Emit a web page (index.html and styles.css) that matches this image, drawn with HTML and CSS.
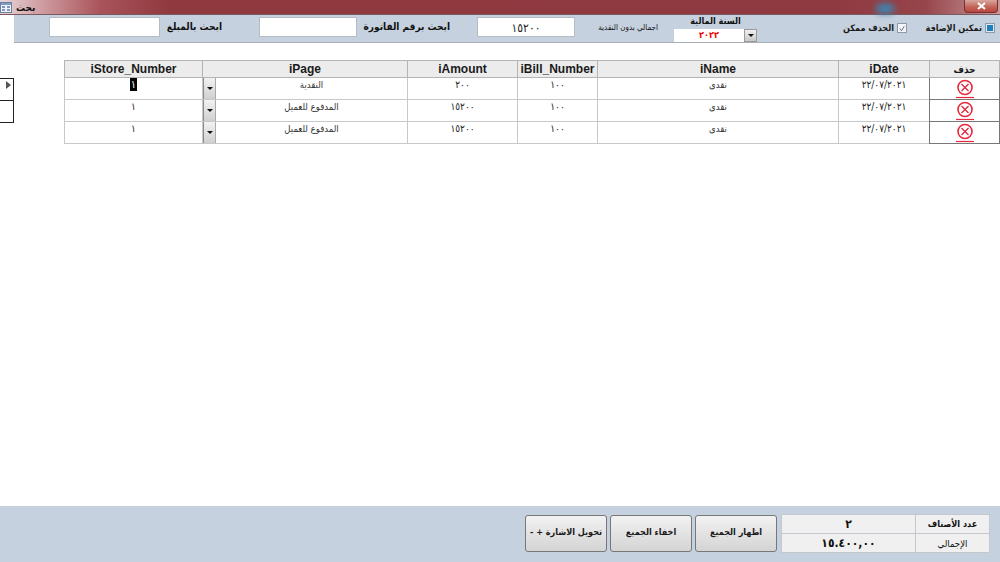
FILE: index.html
```html
<!DOCTYPE html>
<html lang="ar" dir="rtl">
<head>
  <meta charset="UTF-8" />
  <title>بحث</title>
  <link rel="stylesheet" href="styles.css">
</head>
<body>

  <!-- Title bar -->
  <div class="titlebar" dir="ltr">
    <svg class="form-icon" width="12" height="11" viewBox="0 0 12 11">
      <rect x="0.5" y="0.5" width="11" height="10" fill="#eef3fa" stroke="#6d7f9c"/>
      <rect x="1" y="1" width="10" height="2" fill="#7e9cc6"/>
      <path d="M2 5h3M7 5h3M2 8h3M7 8h3" stroke="#5f7ba8" stroke-width="1.4"/>
    </svg>
    <span class="title-text">بحث</span>
    <span class="title-glow"></span>
    <span class="close-btn">
      <svg width="9" height="8" viewBox="0 0 9 8"><path d="M1 1l7 6M8 1L1 7" stroke="#fff" stroke-width="2"/></svg>
    </span>
  </div>

  <!-- Search toolbar -->
  <div class="toolbar">
    <label class="check check-add"><span class="box box-on"></span>تمكين الإضافة</label>
    <label class="check check-del"><span class="box box-ticked">
      <svg width="9" height="9" viewBox="0 0 9 9"><path d="M2 4.5l2 2.5 3-5" fill="none" stroke="#56607a" stroke-width="1"/></svg>
    </span>الحذف ممكن</label>
    <div class="year">
      <div class="year-label">السنة المالية</div>
      <div class="year-combo" dir="ltr">
        <span class="year-value">٢٠٢٢</span>
        <span class="year-arrow"><i class="arrow"></i></span>
      </div>
    </div>
    <span class="total-label">اجمالي بدون النقدية</span>
    <div class="field field-total">١٥٢٠٠</div>
    <span class="search-label label-bill">ابحث برقم الفاتورة</span>
    <div class="field field-bill"></div>
    <span class="search-label label-amount">ابحث بالمبلغ</span>
    <div class="field field-amount"></div>
  </div>

  <!-- Records -->
  <div class="records">
    <table class="grid">
      <colgroup>
        <col class="c-del"><col class="c-date"><col class="c-name"><col class="c-bill"><col class="c-amount"><col class="c-page"><col class="c-store">
      </colgroup>
      <thead>
        <tr>
          <th class="th-del">حذف</th><th>iDate</th><th>iName</th><th>iBill_Number</th><th>iAmount</th><th>iPage</th><th>iStore_Number</th>
        </tr>
      </thead>
      <tbody>
        <tr>
          <td class="del"><svg class="x-icon" width="18" height="20" viewBox="0 0 18 20"><circle cx="9" cy="8.5" r="7" fill="#fff" stroke="#e8283c" stroke-width="1.6"/><path d="M5.5 5l7 7M12.5 5l-7 7" stroke="#d8283c" stroke-width="1.3"/><path d="M0 18.5h18" stroke="#e8283c" stroke-width="1.2"/></svg></td>
          <td class="num">٢٢/٠٧/٢٠٢١</td><td>نقدى</td><td class="num">١٠٠</td><td class="num">٢٠٠</td>
          <td class="combo"><span>النقدية</span><i class="combo-btn"><i class="arrow"></i></i></td>
          <td><span class="selected">١</span></td>
        </tr>
        <tr>
          <td class="del"><svg class="x-icon" width="18" height="20" viewBox="0 0 18 20"><circle cx="9" cy="8.5" r="7" fill="#fff" stroke="#e8283c" stroke-width="1.6"/><path d="M5.5 5l7 7M12.5 5l-7 7" stroke="#d8283c" stroke-width="1.3"/><path d="M0 18.5h18" stroke="#e8283c" stroke-width="1.2"/></svg></td>
          <td class="num">٢٢/٠٧/٢٠٢١</td><td>نقدى</td><td class="num">١٠٠</td><td class="num">١٥٢٠٠</td>
          <td class="combo"><span>المدفوع للعميل</span><i class="combo-btn"><i class="arrow"></i></i></td>
          <td class="num">١</td>
        </tr>
        <tr>
          <td class="del"><svg class="x-icon" width="18" height="20" viewBox="0 0 18 20"><circle cx="9" cy="8.5" r="7" fill="#fff" stroke="#e8283c" stroke-width="1.6"/><path d="M5.5 5l7 7M12.5 5l-7 7" stroke="#d8283c" stroke-width="1.3"/><path d="M0 18.5h18" stroke="#e8283c" stroke-width="1.2"/></svg></td>
          <td class="num">٢٢/٠٧/٢٠٢١</td><td>نقدى</td><td class="num">١٠٠</td><td class="num">١٥٢٠٠</td>
          <td class="combo"><span>المدفوع للعميل</span><i class="combo-btn"><i class="arrow"></i></i></td>
          <td class="num">١</td>
        </tr>
      </tbody>
    </table>
    <div class="selectors">
      <div class="selector"><i class="pointer"></i></div>
      <div class="selector"></div>
    </div>
  </div>

  <!-- Footer -->
  <div class="footer">
    <table class="summary">
      <tr><th>عدد الأصناف</th><td>٢</td></tr>
      <tr><th class="th-plain">الإجمالي</th><td dir="ltr">١٥.٤٠٠,٠٠</td></tr>
    </table>
    <button class="btn">اظهار الجميع</button>
    <button class="btn">اخفاء الجميع</button>
    <button class="btn">تحويل الاشارة + -</button>
  </div>

</body>
</html>
```

FILE: styles.css
```css
html, body {
  height: 100%;
}

body {
  margin: 0;
  background: #fff;
  font-family: "DejaVu Sans Condensed", "DejaVu Sans", sans-serif;
  color: #111;
  display: flex;
  flex-direction: column;
  height: 562px;
  overflow: hidden;
}

/* title bar */
.titlebar {
  position: relative;
  height: 15px;
  display: flex;
  align-items: center;
  flex-shrink: 0;
  background: linear-gradient(to right, #e8d5d8 0, #cf9fa3 40px, #a9545a 100px, #903a40 170px, #8f3a40 840px, #96454a 925px, #c89a9c 1000px);
  border-bottom: 1px solid #7a5a60;
  box-sizing: border-box;
}

.form-icon {
  margin: 1px 0 0 0;
}

.title-text {
  margin-left: 4px;
  font-size: 10px;
  font-weight: bold;
  color: #111;
}

.title-glow {
  position: absolute;
  left: 875px;
  top: 3px;
  width: 20px;
  height: 11px;
  border-radius: 50%;
  background: #3f82ad;
  filter: blur(3px);
}

.close-btn {
  position: absolute;
  right: 2px;
  top: 0;
  width: 34px;
  height: 13px;
  display: flex;
  align-items: center;
  justify-content: center;
  background: linear-gradient(#d8a8a0, #c4685c 55%, #b8453e);
  border: 1px solid #7a3030;
  border-top: 0;
  border-radius: 0 0 4px 4px;
  box-sizing: border-box;
}

/* toolbar */
.toolbar {
  height: 28px;
  margin-left: 14px;
  flex-shrink: 0;
  background: #c5d1de;
  border-bottom: 1px solid #a8adb5;
  box-sizing: border-box;
  display: flex;
  align-items: center;
}

.check {
  display: flex;
  align-items: center;
  gap: 3px;
  font-size: 9px;
  font-weight: bold;
  white-space: nowrap;
  color: #1a1a1a;
  margin-top: -1px;
}

.check-add { margin-right: 5px; width: 67px; }
.check-del { margin-right: 21px; width: 62px; }

.box {
  width: 10px;
  height: 10px;
  box-sizing: border-box;
  flex-shrink: 0;
  border: 1px solid #8e99a8;
  background: #fff;
  display: flex;
}

.box-on {
  background: #1f7fb8;
  box-shadow: inset 0 0 0 1px #dfe8f0;
}

.box-ticked {
  background: #f2f4f7;
}

.year {
  margin-right: 88px;
  width: 83px;
  align-self: flex-end;
}

.year-label {
  font-size: 9px;
  font-weight: bold;
  text-align: center;
  height: 13px;
  line-height: 10px;
}

.year-combo {
  height: 13px;
  display: flex;
  background: #fff;
}

.year-value {
  flex: 1;
  text-align: center;
  font-size: 9px;
  font-weight: bold;
  color: #f00000;
  line-height: 12px;
}

.year-arrow {
  width: 13px;
  background: linear-gradient(#f0f0f0, #c8c8c8);
  border: 1px solid #9a9a9a;
  box-sizing: border-box;
  display: flex;
  align-items: center;
  justify-content: center;
}

.arrow {
  display: block;
  width: 0;
  height: 0;
  border-left: 3px solid transparent;
  border-right: 3px solid transparent;
  border-top: 3px solid #111;
}

.total-label {
  margin-right: 16px;
  width: 62px;
  font-size: 8px;
  white-space: nowrap;
  margin-top: -3px;
}

.field {
  height: 20px;
  background: #fff;
  border: 1px solid #b6bcc4;
  box-sizing: border-box;
  margin-top: -4px;
  text-align: center;
  font-size: 12px;
  letter-spacing: 1.5px;
  line-height: 20px;
  color: #222;
}

.field-total { width: 98px; margin-right: 21px; }
.field-bill { width: 98px; margin-right: 9px; }
.field-amount { width: 111px; margin-right: 7px; }

.search-label {
  font-size: 10px;
  font-weight: bold;
  white-space: nowrap;
  margin-top: -4px;
}

.label-bill { width: 84px; margin-right: 27px; }
.label-amount { width: 55px; margin-right: 37px; }

/* records */
.records {
  flex: 1;
  display: flex;
  justify-content: space-between;
  align-items: flex-start;
  padding-top: 17px;
}

.selectors {
  margin-top: 18px;
  width: 14px;
  flex-shrink: 0;
  border-right: 1px solid #222;
  border-bottom: 1px solid #222;
  box-sizing: border-box;
}

.selector {
  height: 22px;
  border-top: 1px solid #222;
  box-sizing: border-box;
  position: relative;
}

.pointer {
  position: absolute;
  left: 6px;
  top: 2px;
  width: 0;
  height: 0;
  border-top: 4px solid transparent;
  border-bottom: 4px solid transparent;
  border-left: 5px solid #555;
}

.grid {
  border-collapse: collapse;
  table-layout: fixed;
  width: 935px;
  flex-shrink: 0;
}

.c-del { width: 70px; }
.c-date { width: 91px; }
.c-name { width: 241px; }
.c-bill { width: 80px; }
.c-amount { width: 110px; }
.c-page { width: 205px; }
.c-store { width: 138px; }

.grid th {
  height: 17px;
  box-sizing: border-box;
  padding: 0;
  background: #ececec;
  border: 1px solid #b4b4b4;
  font-family: "Liberation Sans", sans-serif;
  font-size: 12px;
  font-weight: bold;
  color: #1a1a1a;
}

.grid .th-del {
  font-family: "DejaVu Sans Condensed", "DejaVu Sans", sans-serif;
  font-size: 10px;
}

.grid td {
  height: 22px;
  padding: 0 0 8px;
  box-sizing: border-box;
  border: 1px solid #c8c8c8;
  text-align: center;
  vertical-align: middle;
  font-size: 9.5px;
  color: #333;
}

.grid td.num {
  font-size: 10px;
  letter-spacing: 1.2px;
  color: #222;
}

.grid td.del {
  padding: 0;
  border: 1px solid #777;
  vertical-align: bottom;
}

.x-icon {
  display: block;
  margin: 1px auto 0;
}

.grid td.combo {
  position: relative;
  padding-left: 13px;
}

.combo-btn {
  position: absolute;
  left: 0;
  top: 0;
  bottom: 0;
  width: 13px;
  display: flex;
  align-items: center;
  justify-content: center;
  background: linear-gradient(#f2f2f2, #cfcfcf);
  border-left: 1px solid #8a8a8a;
  border-right: 1px solid #aaa;
  box-sizing: border-box;
}

.selected {
  background: #000;
  color: #fff;
  padding: 0 1px;
  font-size: 11px;
  line-height: 13px;
  display: inline-block;
}

/* footer */
.footer {
  height: 56px;
  flex-shrink: 0;
  background: #c5d1de;
  display: flex;
  align-items: flex-start;
  padding: 8px 10px 0 0;
  box-sizing: border-box;
  gap: 3px;
}

.summary {
  border-collapse: collapse;
  table-layout: fixed;
  width: 209px;
  height: 36px;
  margin-left: 1px;
  background: #f0f0f0;
}

.summary th, .summary td {
  border: 1px solid #c3c8ce;
  padding: 0;
  text-align: center;
  height: 18px;
}

.summary th {
  width: 73px;
  font-size: 9px;
  font-weight: bold;
}

.summary .th-plain {
  font-weight: normal;
  font-size: 9.5px;
}

.summary td {
  font-size: 12px;
  font-weight: bold;
}

.btn {
  width: 82px;
  height: 37px;
  padding: 0 0 3px;
  margin-top: 1px;
  border: 1px solid #777;
  border-radius: 3px;
  background: linear-gradient(#f2f2f2, #d4d4d4);
  font-family: "DejaVu Sans Condensed", "DejaVu Sans", sans-serif;
  font-size: 9px;
  font-weight: bold;
  color: #1a1a1a;
  white-space: nowrap;
}
```
